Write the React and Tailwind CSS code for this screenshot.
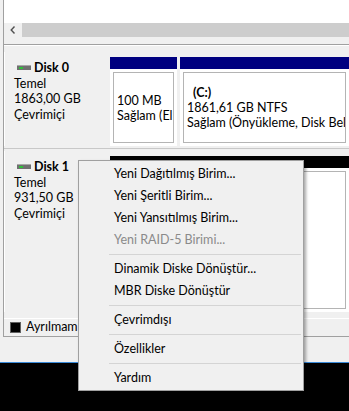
import React from 'react';

function DriveIcon() {
  return (
    <svg width="14" height="6" viewBox="0 0 14 6" className="shrink-0">
      <rect x="0" y="0" width="14" height="5" fill="#707070" />
      <rect x="0" y="0" width="14" height="1" fill="#a8a8a8" />
      <rect x="2" y="2" width="4" height="2" fill="#2fbf3a" />
    </svg>
  );
}

function DiskLabel({ name, size }) {
  return (
    <div className="w-[103px] shrink-0 bg-[#f0f0f0] border-l border-white pt-[8px] pl-[9px] leading-[15.5px]">
      <div className="flex items-center gap-[3px] ml-[3px]">
        <DriveIcon />
        <span className="font-bold">{name}</span>
      </div>
      <div>Temel</div>
      <div>{size}</div>
      <div>Çevrimiçi</div>
    </div>
  );
}

function Partition({ width, color, lines, bold }) {
  return (
    <div className={`flex flex-col ${width}`}>
      <div className={`h-[12px] shrink-0 ${color}`}></div>
      <div className="flex-1 bg-white p-[3px] min-h-0">
        <div className="h-full border border-[#b4b4b4] flex flex-col justify-center pl-[3px] overflow-hidden whitespace-nowrap leading-[15px]">
          {bold && <div className="font-bold pl-[6px]">{bold}</div>}
          {lines.map((l) => (
            <div key={l}>{l}</div>
          ))}
        </div>
      </div>
    </div>
  );
}

const menu = [
  { t: 'Yeni Dağıtılmış Birim...' },
  { t: 'Yeni Şeritli Birim...' },
  { t: 'Yeni Yansıtılmış Birim...' },
  { t: 'Yeni RAID-5 Birimi...', off: true },
  { sep: true },
  { t: 'Dinamik Diske Dönüştür...' },
  { t: 'MBR Diske Dönüştür' },
  { sep: true },
  { t: 'Çevrimdışı' },
  { sep: true },
  { t: 'Özellikler' },
  { sep: true },
  { t: 'Yardım' },
];

export default function App() {
  return (
    <div className="w-[349px] h-[411px] relative overflow-hidden bg-[#f0f0f0] text-[12.5px] text-black font-['Lato',sans-serif] flex flex-col">
      <div className="ml-[3px] border-l border-[#a0a0a0] h-[337px] shrink-0 flex flex-col">
        {/* top pane */}
        <div className="h-[23px] bg-white"></div>
        {/* scrollbar */}
        <div className="h-[14px] flex">
          <div className="w-[18px] bg-[#f0f0f0] flex items-center justify-center">
            <svg width="6" height="8" viewBox="0 0 6 8">
              <path d="M4.5 0.5 L1.2 4 L4.5 7.5" fill="none" stroke="#505050" strokeWidth="1.4" />
            </svg>
          </div>
          <div className="flex-1 bg-[#cdcdcd]"></div>
        </div>
        <div className="h-[7px]"></div>
        <div className="h-px bg-[#a0a0a0]"></div>
        <div className="h-px bg-white"></div>
        <div className="h-[6px]"></div>

        {/* Disk 0 */}
        <div className="h-[94px] flex">
          <DiskLabel name="Disk 0" size="1863,00 GB" />
          <div className="flex-1 ml-[3px] mt-[5px] flex gap-[3px] min-w-0">
            <Partition width="w-[67px] shrink-0" color="bg-[#000080]" lines={['100 MB', 'Sağlam (El']} />
            <Partition width="flex-1 min-w-0" color="bg-[#000080]" bold="(C:)" lines={['1861,61 GB NTFS', 'Sağlam (Önyükleme, Disk Belle']} />
          </div>
        </div>
        <div className="h-[5px] flex flex-col justify-center">
          <div className="h-px bg-[#c8c8c8]"></div>
        </div>

        {/* Disk 1 */}
        <div className="h-[161px] flex">
          <DiskLabel name="Disk 1" size="931,50 GB" />
          <div className="flex-1 ml-[3px] mt-[5px] flex min-w-0">
            <Partition width="flex-1 min-w-0" color="bg-black" lines={['']} />
          </div>
        </div>
        <div className="h-[6px]"></div>

        {/* legend */}
        <div className="h-[19px] border-t border-white border-b border-b-[#a0a0a0] flex items-center pl-[6px] gap-[5px]">
          <div className="w-[11px] h-[11px] bg-black border border-[#606060]"></div>
          <span>Ayrılmam</span>
        </div>
      </div>
      <div className="h-[25px] shrink-0"></div>
      <div className="h-px shrink-0 bg-[#3a8ad8]"></div>
      <div className="flex-1 bg-black"></div>

      {/* context menu */}
      <div className="absolute left-[78px] top-[160px] w-[226px] bg-[#f0f0f0] border border-[#a0a0a0] pt-[2px] pb-[1px] shadow-[2px_2px_3px_rgba(0,0,0,0.35)]">
        {menu.map((m, i) =>
          m.sep ? (
            <div key={i} className="h-[7px] flex items-center">
              <div className="ml-[30px] mr-[2px] flex-1 h-px bg-[#d4d4d4]"></div>
            </div>
          ) : (
            <div key={i} className={`h-[22px] flex items-center pl-[35px] ${m.off ? 'text-[#8a8a8a]' : ''}`}>
              {m.t}
            </div>
          )
        )}
      </div>
    </div>
  );
}
